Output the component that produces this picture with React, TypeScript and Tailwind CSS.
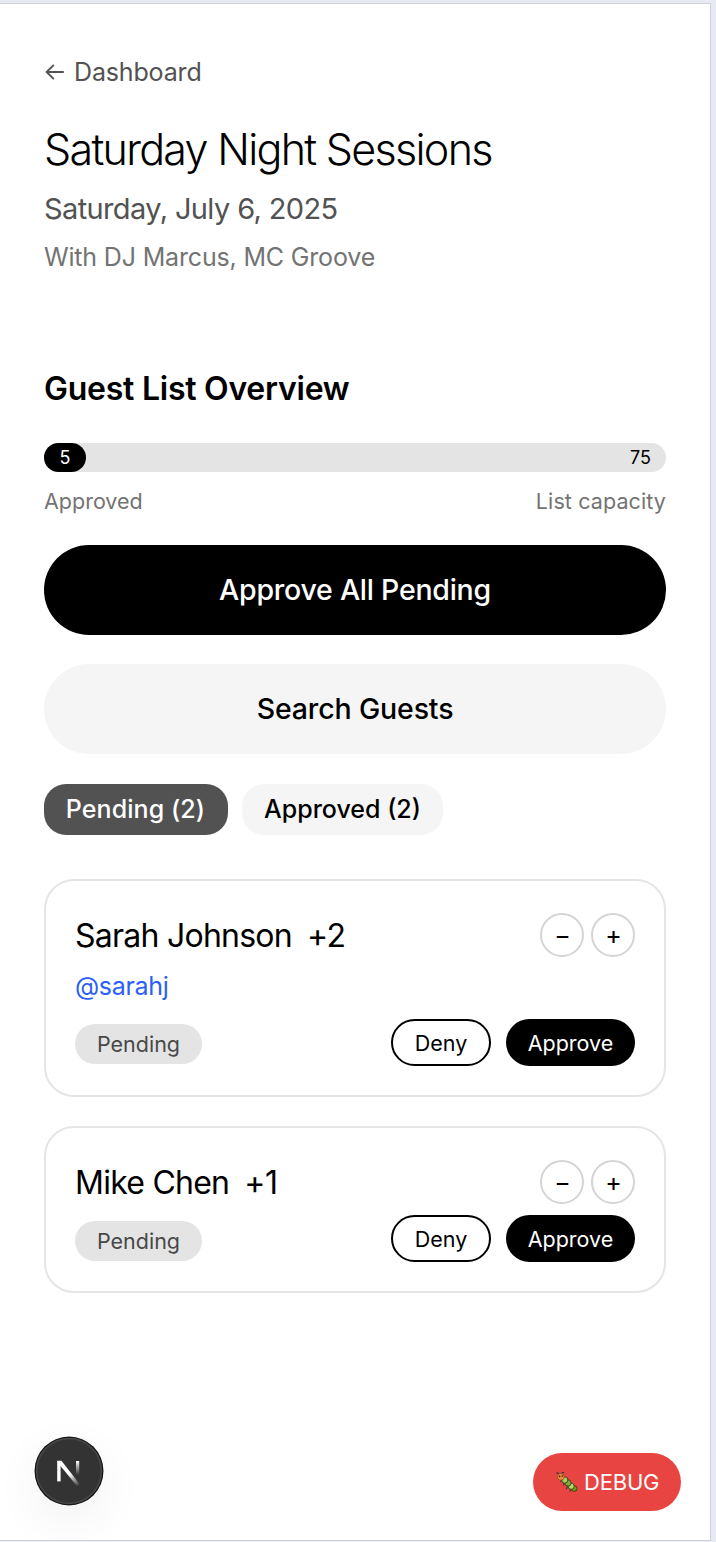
import React from "react";

type Guest = { name: string; plus: string; handle?: string };

const guests: Guest[] = [
  { name: "Sarah Johnson", plus: "+2", handle: "@sarahj" },
  { name: "Mike Chen", plus: "+1" },
];

function BackArrow() {
  return (
    <svg width="20" height="18" viewBox="0 0 20 18" fill="none" stroke="#525252" strokeWidth="1.8" strokeLinecap="round" strokeLinejoin="round">
      <path d="M9.4 2.4 2.6 9l6.8 6.6M2.6 9h16.6" />
    </svg>
  );
}

function Caterpillar() {
  return (
    <svg width="24" height="24" viewBox="0 0 24 24">
      <g fill="none" stroke="#3a3548" strokeWidth="1.1" strokeLinecap="round">
        <path d="M4 4.4C3.6 3 2.8 2.6 1.8 3.2M6.6 4c.2-1.6 1.2-2 2.2-1.4" />
        <path d="M6.6 9.6l-.8 2M9.6 13l-1.2 2M12.4 16.6l-1 2.2M15.6 19.6l-.6 1.6" />
      </g>
      <ellipse cx="19.2" cy="18.6" rx="2.9" ry="2.7" fill="#6f9a1d" stroke="#26350c" strokeWidth="0.8" />
      <ellipse cx="16.2" cy="16.2" rx="3" ry="3.1" fill="#b4d860" stroke="#26350c" strokeWidth="0.8" />
      <ellipse cx="13" cy="13" rx="3.1" ry="3.2" fill="#86a83a" stroke="#26350c" strokeWidth="0.8" />
      <ellipse cx="9.8" cy="10" rx="3.1" ry="3.2" fill="#a9c95a" stroke="#26350c" strokeWidth="0.8" />
      <circle cx="5.8" cy="6.8" r="3.4" fill="#ee8a3c" stroke="#6b3610" strokeWidth="0.5" />
      <circle cx="4.6" cy="6.4" r="0.8" fill="#2a1a10" />
      <circle cx="7.2" cy="6" r="0.8" fill="#2a1a10" />
    </svg>
  );
}

function FrameworkBadge() {
  return (
    <svg width="70" height="70" viewBox="0 0 70 70" fill="none">
      <defs>
        <linearGradient id="stem" x1="0" y1="25" x2="0" y2="39" gradientUnits="userSpaceOnUse">
          <stop stopColor="#fff" />
          <stop offset="1" stopColor="#fff" stopOpacity="0" />
        </linearGradient>
        <linearGradient id="slash" x1="36" y1="38" x2="45" y2="50" gradientUnits="userSpaceOnUse">
          <stop stopColor="#fff" />
          <stop offset="1" stopColor="#fff" stopOpacity="0" />
        </linearGradient>
      </defs>
      <circle cx="35" cy="35" r="34.5" fill="#171717" />
      <circle cx="35" cy="35" r="32.4" fill="#333" stroke="#464646" strokeWidth="1.6" />
      <path d="M24.9 45.4V25" stroke="#fff" strokeWidth="3.4" />
      <path d="M23.2 24.8h4.2l18.4 23.4-2.8 1.9L23.6 26.4Z" fill="url(#slash)" />
      <path d="M42 25h3.2v15H42Z" fill="url(#stem)" />
    </svg>
  );
}

function RoundButton({ children, label }: { children: React.ReactNode; label: string }) {
  return (
    <button aria-label={label} className="flex h-11 w-11 items-center justify-center rounded-full border-2 border-[#d4d4d4] pl-px text-[25px] leading-none text-black">
      {children}
    </button>
  );
}

function GuestCard({ guest }: { guest: Guest }) {
  return (
    <article className={`rounded-[30px] border-2 border-[#e5e5e5] px-[29px] pt-8 ${guest.handle ? "h-[218px]" : "h-[167px]"}`}>
      <div className="flex h-11 items-center justify-between">
        <h3 className="flex gap-[15px] pt-[2px] text-[32px] leading-[44px] text-black">
          <span className="tracking-[-0.75px]">{guest.name}</span>
          <span className="tracking-[-0.5px]">{guest.plus}</span>
        </h3>
        <div className="flex gap-[7px]">
          <RoundButton label="Remove a plus one">−</RoundButton>
          <RoundButton label="Add a plus one">+</RoundButton>
        </div>
      </div>
      {guest.handle && <a className="mt-4 block text-[25px] leading-[26px] tracking-[-0.3px] text-[#2b5ff5]">{guest.handle}</a>}
      <div className={`flex items-end justify-between ${guest.handle ? "mt-5" : "mt-[11px]"}`}>
        <span className={`flex h-10 w-[127px] items-center justify-center rounded-full bg-[#e4e4e4] text-[21.5px] text-[#484848] ${guest.handle ? "mb-[2px]" : "mb-px"}`}>Pending</span>
        <div className="flex gap-[15px]">
          <button className="flex h-[47px] w-[100px] items-center justify-center rounded-full border-2 border-black pt-px text-[21.5px] text-black">Deny</button>
          <button className="flex h-[47px] w-[129px] items-center justify-center rounded-full bg-black pt-px text-[21.5px] text-white">Approve</button>
        </div>
      </div>
    </article>
  );
}

export default function App() {
  return (
    <div className="h-[1542px] w-[716px] overflow-hidden bg-[#e7eaf2] pt-[3px] font-['Inter',sans-serif]">
      <main className="relative h-[1538px] w-[711px] overflow-hidden border-t border-r border-b border-[#cfd0d8] bg-white pt-[55px] pr-11 pl-11">
        <a className="flex items-center gap-[10px] text-[25px] leading-[26px] tracking-[-0.15px] text-[#525252]">
          <BackArrow />
          <span>Dashboard</span>
        </a>
        <h1 className="mt-[42px] text-[43px] leading-[44px] font-light tracking-[-1.7px] whitespace-nowrap text-black">Saturday Night Sessions</h1>
        <p className="mt-[23px] text-[29px] leading-[30px] tracking-[-0.62px] text-[#525252]">Saturday, July 6, 2025</p>
        <p className="mt-5 text-[25px] leading-[26px] tracking-[-0.17px] text-[#737373]">With DJ Marcus, MC Groove</p>

        <h2 className="mt-[102px] text-[32px] leading-[34px] font-semibold tracking-[-0.25px] text-black">Guest List Overview</h2>
        <div className="mt-[37px] flex h-[29px] items-center justify-between rounded-full bg-[#e4e4e4] pr-[15px] text-[18px]">
          <span className="flex h-full w-[42px] items-center justify-center rounded-full bg-black text-white">5</span>
          <span className="text-black">75</span>
        </div>
        <div className="mt-[18px] flex justify-between text-[21.5px] leading-[23px] text-[#737373]">
          <span>Approved</span>
          <span className="tracking-[0.1px]">List capacity</span>
        </div>
        <button className="mt-8 flex h-[90px] w-full items-center justify-center rounded-full bg-black text-[28.5px] font-medium tracking-[-0.25px] text-white">
          <span>Approve All Pending</span>
        </button>
        <button className="mt-[29px] flex h-[90px] w-full items-center justify-center rounded-full bg-[#f5f5f5] text-[28.5px] font-medium tracking-[-0.15px] text-black">
          <span>Search Guests</span>
        </button>
        <div className="mt-[30px] flex gap-[14px] text-[25px] font-medium">
          <button className="flex h-[51px] w-[184px] items-center justify-center rounded-[22px] bg-[#525252] pr-px tracking-[0.08px] text-white">
            <span>Pending (2)</span>
          </button>
          <button className="flex h-[51px] w-[201px] items-center justify-center rounded-[22px] bg-[#f5f5f5] text-black">
            <span>Approved (2)</span>
          </button>
        </div>
        <section className="mt-11 flex flex-col gap-[29px]">
          {guests.map((g) => (
            <GuestCard key={g.name} guest={g} />
          ))}
        </section>

        <div className="absolute top-[1432px] left-[34px] rounded-full shadow-[0_16px_48px_rgba(0,0,0,0.06)]">
          <FrameworkBadge />
        </div>
        <button className="absolute top-[1449px] left-[533px] flex h-[58px] w-[148px] items-center rounded-full bg-[#e84442] pl-[22px] text-[22px] tracking-[-0.2px] text-white">
          <Caterpillar />
          <span className="ml-[5px]">DEBUG</span>
        </button>
      </main>
    </div>
  );
}
